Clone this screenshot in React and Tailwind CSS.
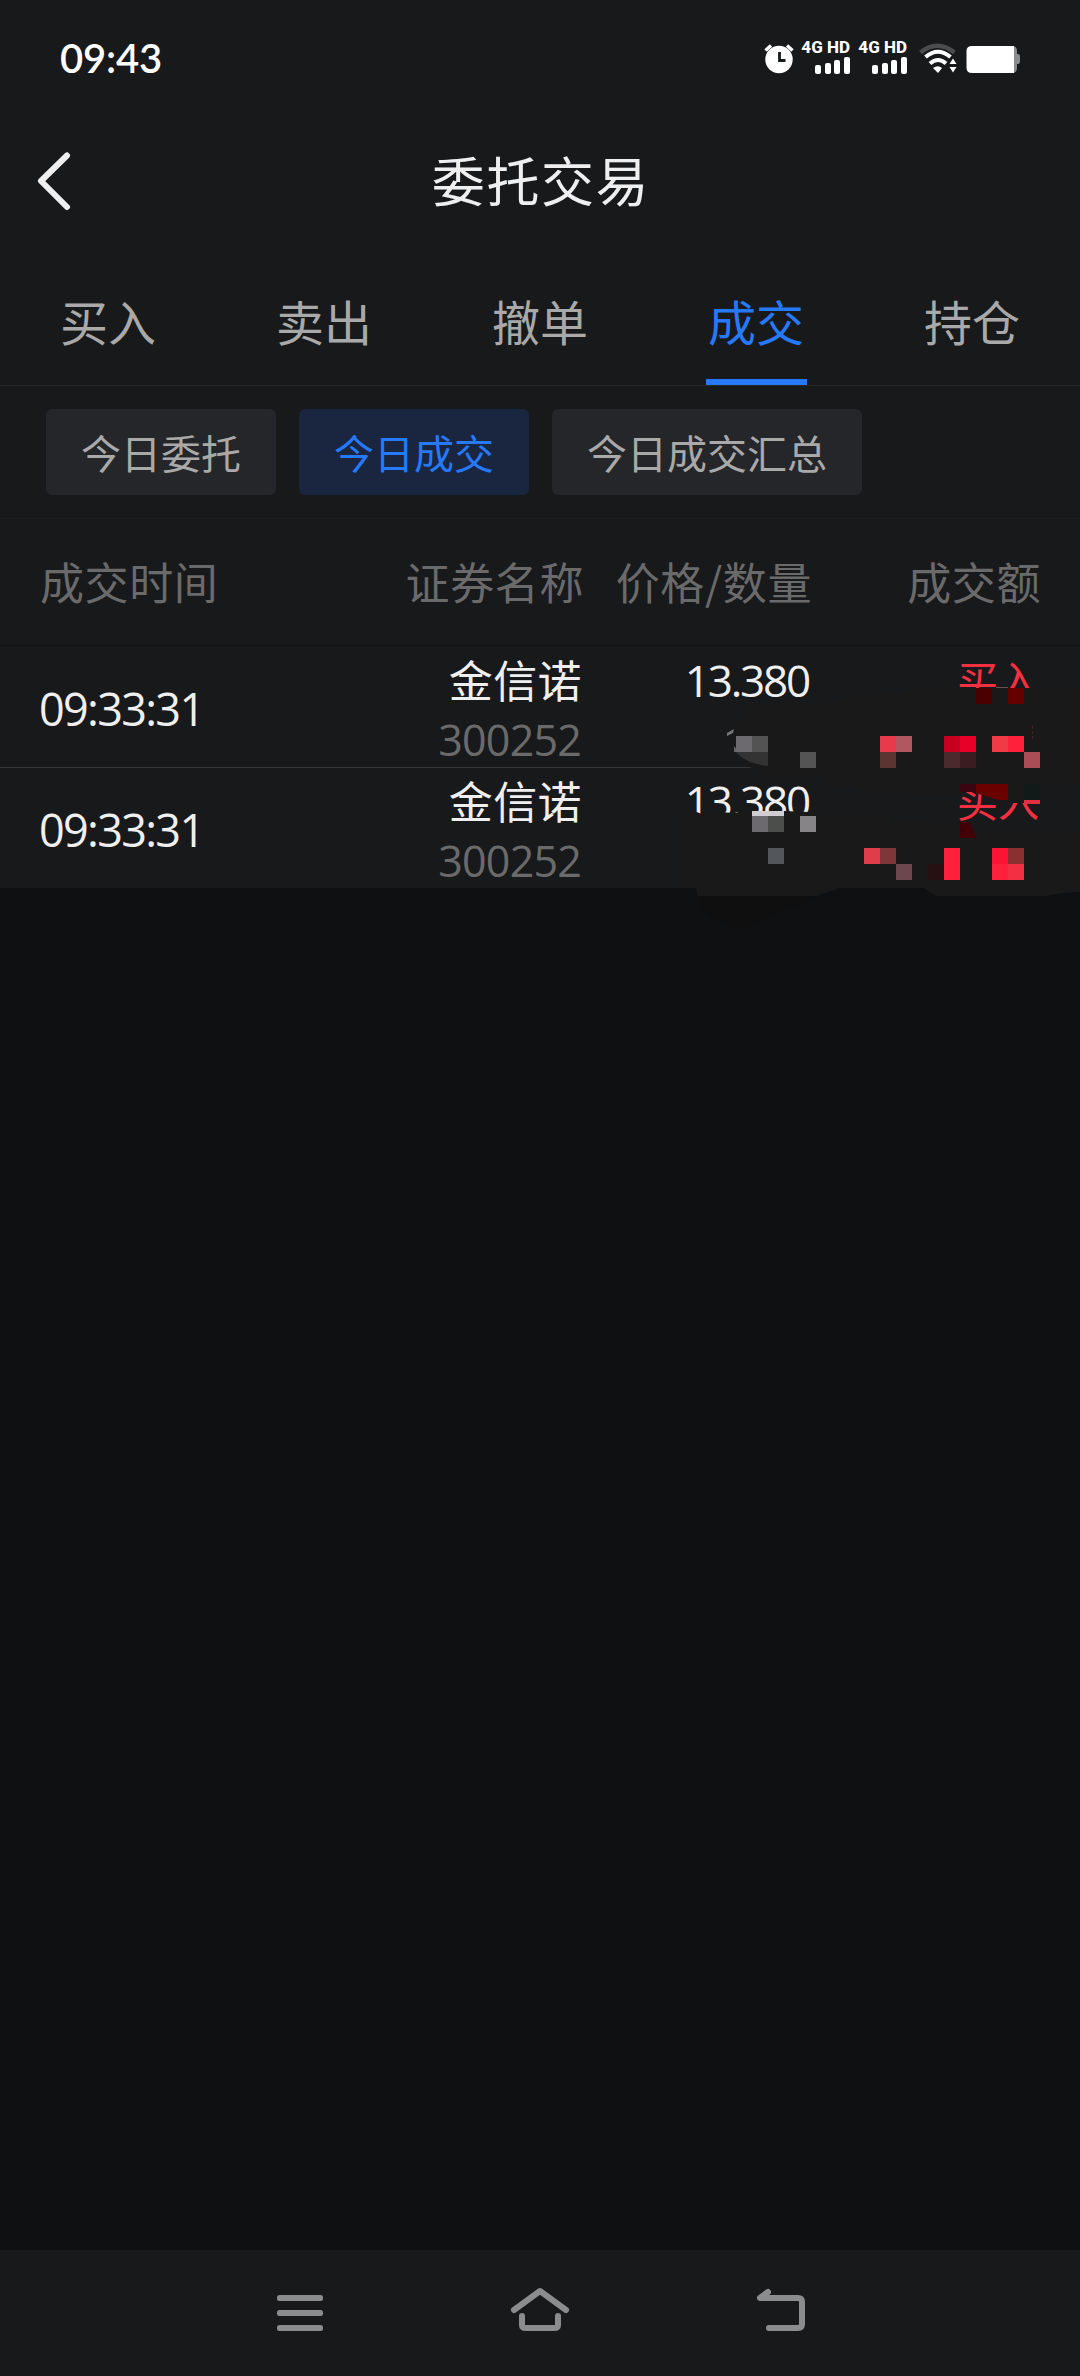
const tabs = ["买入", "卖出", "撤单", "成交", "持仓"];
const filters = ["今日委托", "今日成交", "今日成交汇总"];
const deals = [
  { time: "09:33:31", name: "金信诺", code: "300252", price: "13.380", side: "买入" },
  { time: "09:33:31", name: "金信诺", code: "300252", price: "13.380", side: "买入" },
];

// x, y, width, height, colour
const blocks = [
  [56, 90, 16, 16, "#6c6a6e"],
  [72, 90, 16, 16, "#535353"],
  [120, 106, 16, 16, "#545454"],
  [72, 165, 32, 5, "#d0ced2"],
  [72, 170, 16, 16, "#6c6a6e"],
  [88, 170, 16, 16, "#4b4e4a"],
  [120, 170, 16, 16, "#868487"],
  [88, 202, 16, 16, "#53575b"],
  [296, 42, 16, 16, "#4a0000"],
  [328, 42, 16, 16, "#660000"],
  [316, 41, 12, 1, "#6a5050"],
  [200, 90, 16, 16, "#e83a4b"],
  [216, 90, 16, 16, "#b0575f"],
  [200, 106, 16, 16, "#5c3532"],
  [264, 90, 16, 16, "#c80020"],
  [280, 90, 16, 16, "#e80029"],
  [264, 106, 16, 16, "#4b2a2d"],
  [280, 106, 16, 16, "#3b1c21"],
  [312, 90, 16, 16, "#f03a46"],
  [328, 90, 16, 16, "#ff203c"],
  [344, 106, 16, 16, "#aa4d57"],
  [344, 138, 16, 16, "#111a19"],
  [344, 154, 16, 4, "#e03040"],
  [184, 202, 16, 16, "#e03d4b"],
  [200, 202, 16, 16, "#7f3639"],
  [216, 218, 16, 16, "#6c474d"],
  [248, 218, 16, 16, "#261011"],
  [264, 202, 16, 32, "#ff203c"],
  [312, 202, 16, 16, "#fb1433"],
  [328, 202, 16, 16, "#8b3031"],
  [312, 218, 16, 16, "#ff203c"],
  [328, 218, 16, 16, "#f23044"],
];

function Signal() {
  return (
    <div className="flex w-[48px] flex-col items-end">
      <span className="font-['Roboto',sans-serif] text-[17px] leading-[14px] font-extrabold whitespace-nowrap">4G HD</span>
      <svg className="mt-[2px]" width="36" height="18" viewBox="0 0 36 18" fill="#fff">
        <rect x="1" y="9" width="6" height="9" rx="2" />
        <rect x="11" y="7" width="6" height="11" rx="2" />
        <rect x="20" y="4" width="6" height="14" rx="2" />
        <rect x="30" y="1" width="6" height="17" rx="2" />
      </svg>
    </div>
  );
}

function StatusBar() {
  return (
    <div className="flex h-[120px] items-start justify-between pt-[40px] pr-[59px] pl-[60px] text-white">
      <div className="font-['Lato',sans-serif] text-[40px] leading-[36px] font-semibold tracking-[-0.2px]">09:43</div>
      <div className="flex items-start">
        <svg className="mt-[3px]" width="32" height="32" viewBox="0 0 32 32">
          <circle cx="16" cy="16.5" r="13.7" fill="#fff" />
          <path d="M2.5 7.5 8 2.5M29.5 7.5 24 2.5" stroke="#fff" strokeWidth="3.4" />
          <path d="M16.5 9v8.5h6" fill="none" stroke="#18191b" strokeWidth="2.8" />
        </svg>
        <div className="ml-[7px] flex gap-[9px]">
          <Signal />
          <Signal />
        </div>
        <svg className="ml-[12px] mt-[3px]" width="38" height="31" viewBox="0 0 38 31" fill="none">
          <path d="M1.5 9.5Q18 -4 35.5 9.5" stroke="#4b4c4e" strokeWidth="4.2" />
          <path d="M6.5 14Q19 3.5 31.5 14" stroke="#fff" strokeWidth="4" />
          <path d="M11 20.5Q19 13.5 27 20.5" stroke="#fff" strokeWidth="4" />
          <path d="M14 25Q19 21.5 23 25L19 30Z" fill="#fff" />
          <path d="M34 15.5 37.5 21H30.5ZM34 29.5 37.5 24H30.5Z" fill="#fff" />
        </svg>
        <svg className="ml-[9px] mt-[5px]" width="55" height="29" viewBox="0 0 55 29">
          <path d="M46 1Q51 1 51 6V9H52Q54 9 54 12V16Q54 19 52 19H51V23Q51 28 46 28Z" fill="#8b8c8d" />
          <path d="M6 1H48V28H6Q0.5 28 0.5 23V6Q0.5 1 6 1Z" fill="#fff" />
        </svg>
      </div>
    </div>
  );
}

// Smudged area over the quantity and amount values
function Redaction() {
  return (
    <svg className="absolute top-0 left-[680px]" width="400" height="290" viewBox="0 0 400 290">
      <path d="M17 250Q28 282 64 282Q110 262 136 250Z" fill="#0f0f0f" />
      <path d="M64 62Q92 52 140 56L230 44 278 42H400V132H98Q64 126 56 102L54 84Z" fill="#191919" />
      <path d="M54 83 47 87V90L53 87Z" fill="#777" />
      <path d="M54 100 57 104V106H54Z" fill="#666" />
      <path d="M56 106H88V120Q66 118 56 106Z" fill="#333" />
      <path d="M0 168 14 165 22 168 28 166 62 167 68 165H104L130 166 278 178V186H400V246Q384 246 366 250H256L244 242H160L136 250H17L16 242 0 240Z" fill="#191919" />
      <path d="M140 122H400V138H296V147L318 154H328V157H344V138H280V150H240L150 140Z" fill="#191919" />
      <path d="M280 138H296V146H280Z" fill="#3a0510" />
      <path d="M296 138H328V154H318L296 147Z" fill="#6b0000" />
      <path d="M328 138H344V156H328Z" fill="#191919" />
      <path d="M280 176H290L296 192H280Z" fill="#420006" />
      {blocks.map(([x, y, w, h, color]) => (
        <rect key={`${x}-${y}`} x={x} y={y} width={w} height={h} fill={color} />
      ))}
      <path d="M352.5 80V94" stroke="#4d1c1f" strokeDasharray="3 2" />
    </svg>
  );
}

function DealRow({ deal }) {
  return (
    <div className="grid h-[121px] grid-cols-[299px_244px_227px_230px] pl-[39px] text-[#efefef] not-first:shadow-[inset_0_1px_#353638]">
      <div className="pt-[41px] font-['Open_Sans',sans-serif] text-[45px] leading-[44px] tracking-[-1.7px]">{deal.time}</div>
      <div className="text-right">
        <div className="pt-[9px] text-[44px] leading-[48px] tracking-[0.4px]">{deal.name}</div>
        <div className="pt-[17px] pr-[1px] font-['Open_Sans',sans-serif] text-[43px] leading-[40px] tracking-[-0.8px] text-[#6a6a6a]">{deal.code}</div>
      </div>
      <div className="pt-[12px] text-right font-['Open_Sans',sans-serif] text-[44px] leading-[44px] tracking-[-2.2px]">{deal.price}</div>
      <div className="pt-[8px] text-right text-[41px] leading-[48px] text-[#f52f42]">{deal.side}</div>
    </div>
  );
}

export default function App() {
  return (
    <div className="flex h-[2376px] w-[1080px] flex-col overflow-hidden bg-[#0f1012] font-['Noto_Sans_CJK_SC',sans-serif]">
      <div className="bg-[#18191b]">
        <StatusBar />

        {/* Title */}
        <header className="grid h-[130px] grid-cols-[120px_1fr_120px] items-center pb-[9px]">
          <svg className="ml-[36px]" width="38" height="60" viewBox="0 0 38 60" fill="none">
            <path d="M31 4.5 5 30 31 56" stroke="#efefef" strokeWidth="6" strokeLinecap="round" strokeLinejoin="round" />
          </svg>
          <h1 className="pb-[3px] pl-[2px] text-center text-[53px] leading-[60px] tracking-[1.6px] text-[#efefef]">委托交易</h1>
        </header>

        {/* Tabs */}
        <nav className="grid h-[136px] grid-cols-5 border-b border-[#27282a]">
          {tabs.map((tab) => (
            <div key={tab} className="flex justify-center">
              <div
                className={
                  tab === "成交"
                    ? "w-[101px] border-b-[6px] border-[#2679f8] pt-[42px] text-center text-[48px] leading-[56px] text-[#2679f8]"
                    : "w-[101px] pt-[42px] text-center text-[48px] leading-[56px] text-[#a9a9a9]"
                }
              >
                {tab}
              </div>
            </div>
          ))}
        </nav>

        {/* Filters */}
        <div className="flex h-[132px] gap-[23px] pt-[23px] pl-[46px]">
          {filters.map((filter) => (
            <button
              key={filter}
              className={
                filter === "今日成交"
                  ? "h-[86px] rounded-[6px] bg-[#1a2640] px-[35px] text-[40px] text-[#2679f8]"
                  : "h-[86px] rounded-[6px] bg-[#25262a] px-[35px] text-[40px] text-[#a9a9a9]"
              }
            >
              {filter}
            </button>
          ))}
        </div>

        {/* Table */}
        <div className="grid h-[128px] grid-cols-[300px_244px_228px_229px] border-t border-b border-t-[#1c1d1e] border-b-[#111214] pt-[30px] pl-10 text-[44px] leading-[64px] tracking-[0.6px] text-[#6a6a6a]">
          <div>成交时间</div>
          <div className="text-right">证券名称</div>
          <div className="text-right whitespace-nowrap">价格/数量</div>
          <div className="text-right">成交额</div>
        </div>
        <div className="relative">
          {deals.map((deal, i) => (
            <DealRow key={i} deal={deal} />
          ))}
          <Redaction />
        </div>
      </div>

      {/* System navigation */}
      <div className="mt-auto flex h-[126px] items-start justify-center gap-[180px] bg-[#18191b] pt-[36px]">
        <svg width="60" height="48" viewBox="0 0 60 48" fill="#8b8c8e">
          <rect x="7" y="9" width="46" height="6" rx="2.5" />
          <rect x="7" y="24" width="46" height="6" rx="2.5" />
          <rect x="7" y="39" width="46" height="6" rx="2.5" />
        </svg>
        <svg width="60" height="48" viewBox="0 0 60 48" fill="none" stroke="#8b8c8e" strokeWidth="6" strokeLinecap="round" strokeLinejoin="round">
          <path d="M4 24 30 5 56 24" />
          <path d="M12 30V39Q12 42 16 42H44Q48 42 48 39V30" />
        </svg>
        <svg width="60" height="48" viewBox="0 0 60 48" fill="none" stroke="#8b8c8e" strokeWidth="6" strokeLinecap="round" strokeLinejoin="round">
          <path d="M18 6 10 12H48Q52 12 52 16V38Q52 42 48 42H19" />
        </svg>
      </div>
    </div>
  );
}
